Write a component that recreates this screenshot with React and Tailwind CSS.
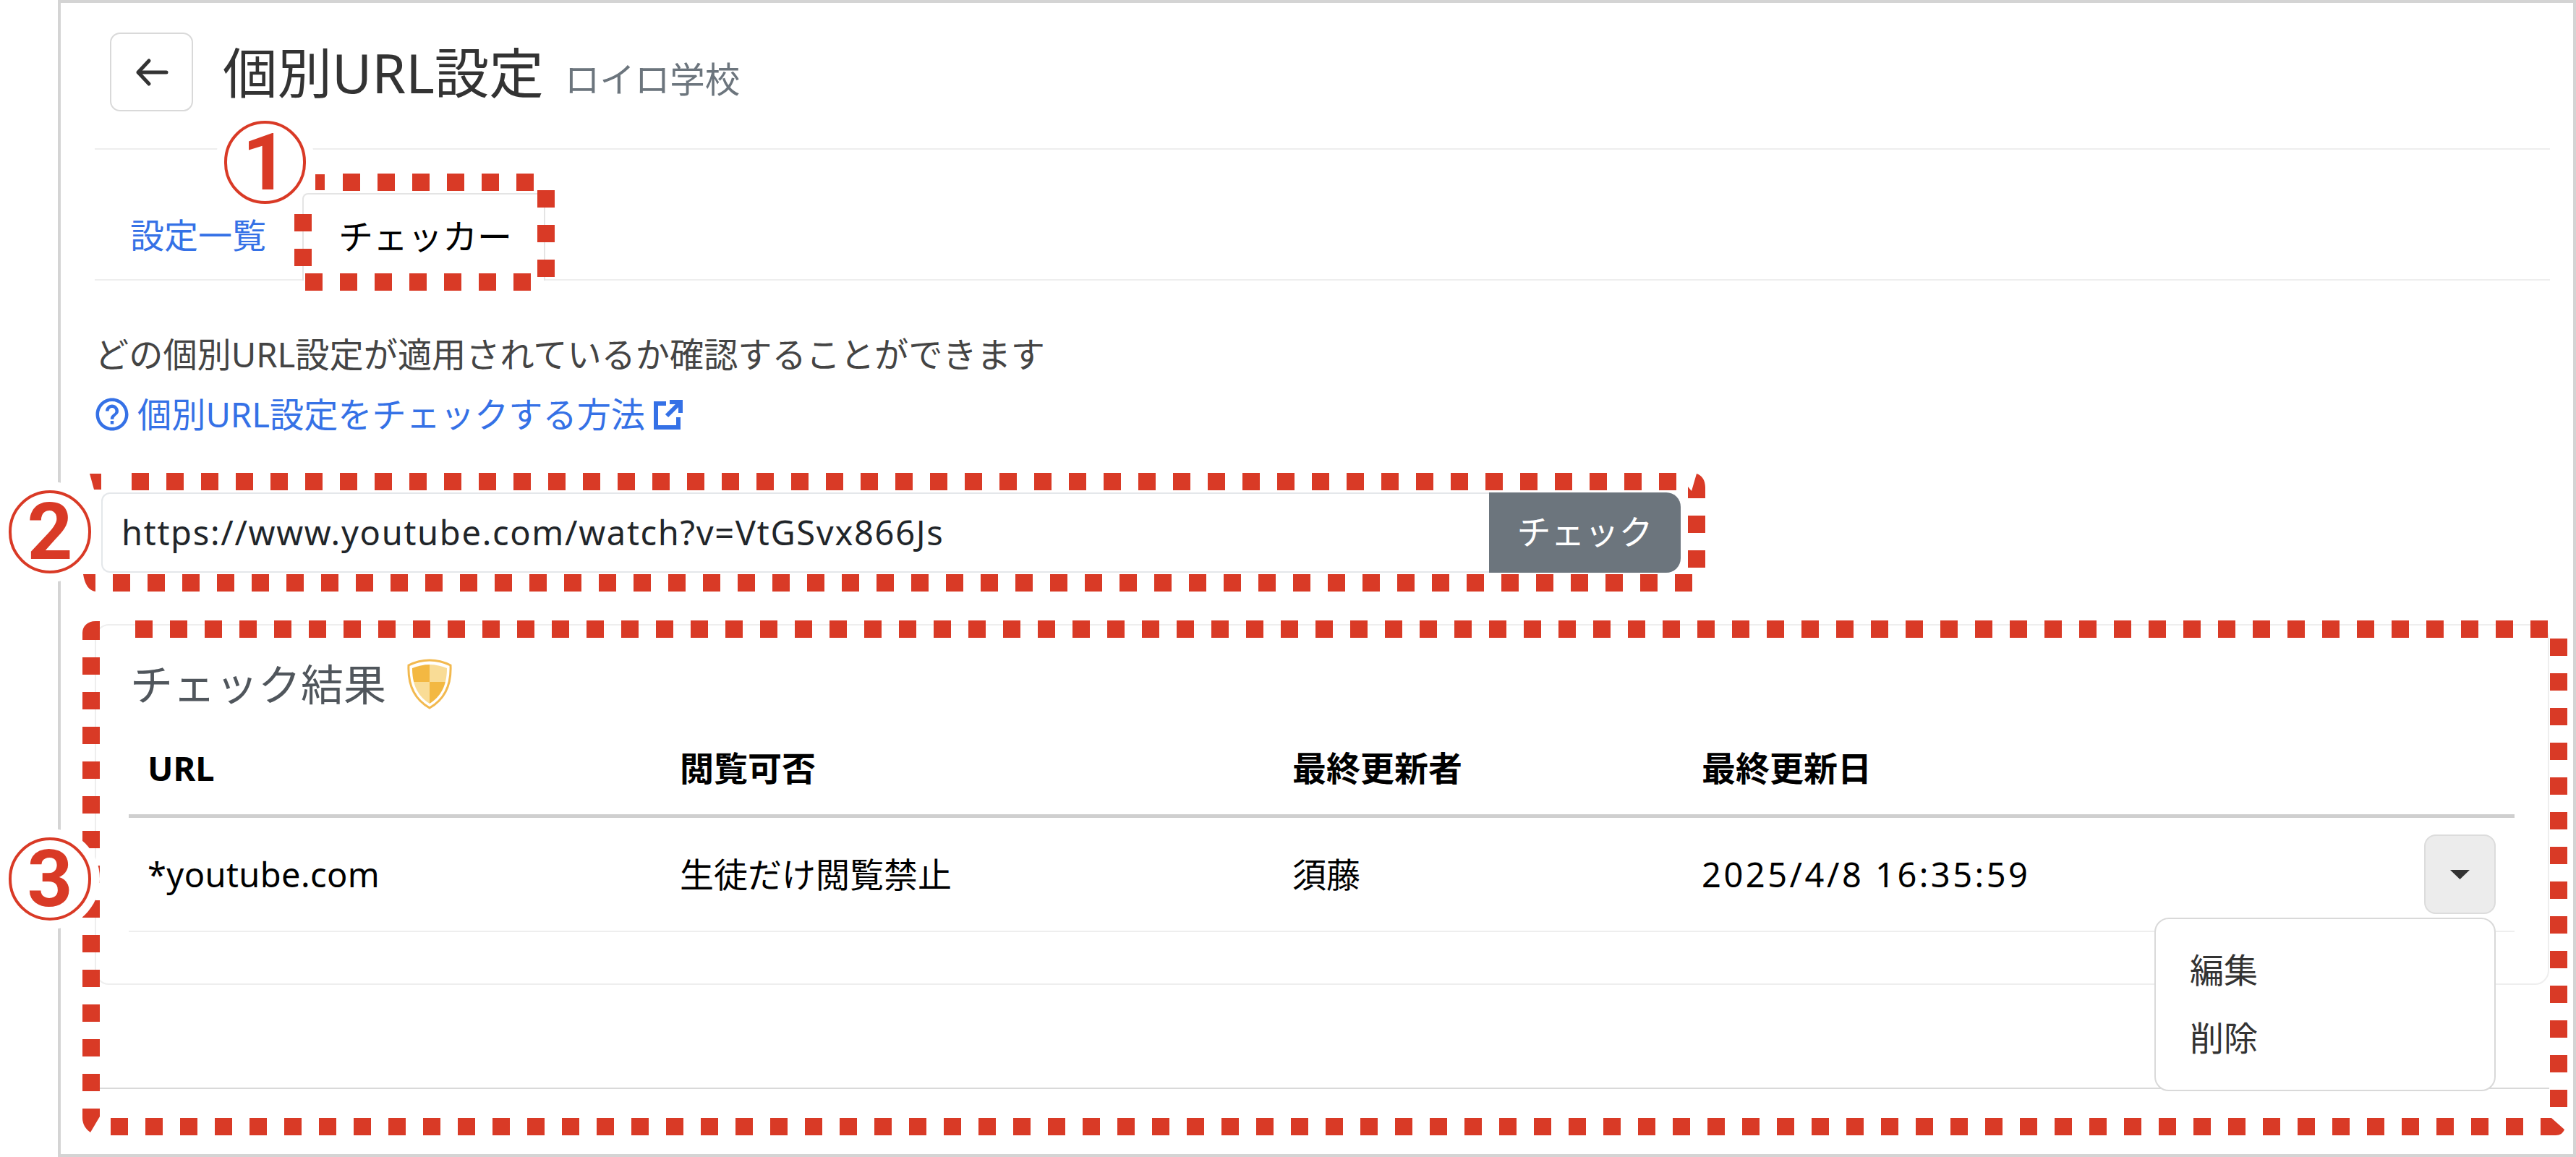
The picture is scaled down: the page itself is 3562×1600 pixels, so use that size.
import React from 'react';
import { MdHelpOutline } from 'react-icons/md';

const RED = '#d93a26';

function DashLine({ x1, y1, x2, y2 }) {
  return <line x1={x1} y1={y1} x2={x2} y2={y2} stroke={RED} strokeWidth="24" strokeDasharray="24 24" />;
}

// red dashed boxes drawn on top of the screenshot
function Annotations() {
  return (
    <svg className="absolute inset-0 w-[3562px] h-[1600px] pointer-events-none" viewBox="0 0 3562 1600">
      {/* box 1 */}
      <rect x="436" y="241" width="13" height="22" fill={RED} />
      <DashLine x1={474} y1={252} x2={738} y2={252} />
      <DashLine x1={755} y1={263} x2={755} y2={383} />
      <DashLine x1={422} y1={390} x2={734} y2={390} />
      <DashLine x1={419} y1={296} x2={419} y2={368} />
      {/* box 2 */}
      <path d="M124 655 L140 655 L140 677 L130 677 Z" fill={RED} />
      <DashLine x1={182} y1={666} x2={2318} y2={666} />
      <path d="M2334 689 L2334 673 L2339 679 L2346 655 C2353 657 2358 664 2358 674 L2358 689 Z" fill={RED} />
      <DashLine x1={2346} y1={713} x2={2346} y2={785} />
      <DashLine x1={156} y1={806} x2={2340} y2={806} />
      <path d="M115 794 L132 794 L132 818 C123 817 117 808 115 794 Z" fill={RED} />
      {/* box 3 */}
      <path d="M114 885 L114 875 C114 866 121 859 132 859 L138 859 L138 885 Z" fill={RED} />
      <DashLine x1={187} y1={870} x2={3523} y2={870} />
      <DashLine x1={3538} y1={883} x2={3538} y2={1531} />
      <DashLine x1={126} y1={909} x2={126} y2={1510} />
      <path d="M114 1533 L138 1533 L138 1544 L125 1566 C119 1562 114 1555 114 1546 Z" fill={RED} />
      <DashLine x1={153} y1={1558} x2={3490} y2={1558} />
      <path d="M3513 1546 L3528 1546 L3546 1562 C3544 1567 3540 1570 3534 1570 L3513 1570 Z" fill={RED} />
    </svg>
  );
}

function ShieldIcon() {
  return (
    <svg width="62" height="70" viewBox="0 0 62 70" className="ml-[29px]">
      <defs>
        <clipPath id="shield-inner">
          <path d="M31 8 C39 8 48 10 55 13 C55 32 50 50 31 62 C12 50 7 32 7 13 C14 10 23 8 31 8 Z" />
        </clipPath>
      </defs>
      <path d="M31 2 C41 2 52 5 60 9 C61 32 54 55 31 68 C8 55 1 32 2 9 C10 5 21 2 31 2 Z" fill="#fff" stroke="#f2b94f" strokeWidth="3" />
      <g clipPath="url(#shield-inner)">
        <rect x="0" y="0" width="31" height="32" fill="#f3b842" />
        <rect x="31" y="0" width="31" height="32" fill="#f9dc96" />
        <rect x="0" y="32" width="31" height="38" fill="#f9dc96" />
        <rect x="31" y="32" width="31" height="38" fill="#f3b842" />
      </g>
    </svg>
  );
}

function ExternalIcon() {
  return (
    <svg width="40" height="42" viewBox="0 0 40 42" fill="none" stroke="currentColor" strokeWidth="6" className="ml-[12px]">
      <path d="M17 6 H3 V39 H34 V25" />
      <path d="M18 23 L35 6 M22 4 H37 V19" />
    </svg>
  );
}

export default function App() {
  return (
    <div className="relative w-[3562px] h-[1600px] bg-white pl-[80px] overflow-hidden font-['Noto_Sans','Noto_Sans_CJK_JP',sans-serif]">
      <div className="h-full border-4 border-[#d4d4d4] pl-[47px] pr-[32px] flex flex-col">
        {/* header */}
        <div className="h-[201px] shrink-0 pl-[21px] pt-[41px] flex items-start">
          <button className="w-[115px] h-[109px] border-2 border-[#d9d9d9] rounded-[14px] flex items-center justify-center">
            <svg width="46" height="40" viewBox="0 0 46 40" fill="none" stroke="#333" strokeWidth="5" strokeLinecap="round" strokeLinejoin="round">
              <path d="M43 20 H4 M19 4 L4 20 L19 36" />
            </svg>
          </button>
          <h1 className="ml-[41px] h-[109px] leading-[109px] text-[75.5px] text-[#333]">個別URL設定</h1>
          <span className="ml-[29px] mt-[10px] h-[109px] leading-[109px] text-[48.5px] text-[#6c757d]">ロイロ学校</span>
        </div>

        {/* tabs */}
        <div className="h-[183px] shrink-0 border-y-2 border-[#eeeeee] flex items-end pl-[49px]">
          <a className="w-[238px] h-[121px] leading-[121px] text-[47px] text-[#3571e6]">設定一覧</a>
          <div className="w-[336px] h-[121px] -mb-[2px] bg-white border-2 border-b-0 border-[#e4e4e4] rounded-t-[8px] pl-[48px] leading-[115px] text-[48px] text-black">チェッカー</div>
        </div>

        {/* description */}
        <p className="mt-[72px] h-[60px] leading-[60px] text-[47.2px] text-[#444]">どの個別URL設定が適用されているか確認することができます</p>
        <a className="mt-[23px] h-[60px] flex items-center text-[47.2px] text-[#3571e6]">
          <MdHelpOutline size={54} className="-ml-[3px]" />
          <span className="ml-[8px]">個別URL設定をチェックする方法</span>
          <ExternalIcon />
        </a>

        {/* url input */}
        <div className="mt-[78px] ml-[9px] w-[2184px] h-[111px] shrink-0 flex">
          <div className="flex-1 border-2 border-r-0 border-[#e4e7ea] rounded-l-[12px] pl-[26px] leading-[107px] text-[47px] tracking-[1.7px] text-[#212529]">https://www.youtube.com/watch?v=VtGSvx866Js</div>
          <button className="w-[265px] bg-[#6c757d] rounded-r-[20px] text-white text-[47px] pb-[3px]">チェック</button>
        </div>

        {/* result card */}
        <div className="mt-[71px] w-[3394px] h-[499px] shrink-0 border-2 border-[#eeeeee] rounded-[20px] pl-[45px] pr-[46px]">
          <div className="mt-[46px] h-[70px] flex items-center">
            <h4 className="ml-[2px] text-[59px] text-[#50565c]">チェック結果</h4>
            <ShieldIcon />
          </div>
          <div className="mt-[26px] grid grid-cols-[736px_847px_566px_1fr] h-[124px] border-b-[5px] border-[#cfcfcf] text-[47px] font-bold text-black leading-[110px]">
            <div className="pl-[26px]">URL</div>
            <div className="pl-[26px]">閲覧可否</div>
            <div className="pl-[26px]">最終更新者</div>
            <div className="pl-[26px]">最終更新日</div>
          </div>
          <div className="grid grid-cols-[736px_847px_566px_1fr] h-[158px] border-b-2 border-[#eeeeee] text-[47px] text-black leading-[156px]">
            <div className="pl-[26px] tracking-[0.4px]">*youtube.com</div>
            <div className="pl-[26px]">生徒だけ閲覧禁止</div>
            <div className="pl-[26px]">須藤</div>
            <div className="pl-[26px] pr-[26px] flex justify-between items-start">
              <span className="tracking-[3.5px]">2025/4/8 16:35:59</span>
              <div className="relative mt-[23px]">
                <button className="w-[99px] h-[110px] bg-[#ececec] border-2 border-[#dcdcdc] rounded-[16px] flex items-center justify-center">
                  <svg width="27" height="13" viewBox="0 0 27 13"><path d="M0 0 H27 L13.5 13 Z" fill="#333" /></svg>
                </button>
                <div className="absolute right-0 top-[115px] z-10 w-[472px] h-[240px] bg-white border-2 border-[#d9d9d9] rounded-[20px] pl-[47px] pt-[40px] text-[47px] text-[#333] leading-[60px]">
                  <div>編集</div>
                  <div className="mt-[34px]">削除</div>
                </div>
              </div>
            </div>
          </div>
        </div>

        {/* lower rule */}
        <div className="mt-[142px] w-[3394px] border-b-2 border-[#d9d9d9]" />
      </div>

      <Annotations />

      <div className="absolute left-[310px] top-[167px] w-[113px] h-[115px] rounded-full border-4 border-[#d93a26] bg-white ring-[12px] ring-white flex items-center justify-center font-['Roboto',sans-serif] font-bold text-[110px] leading-none text-[#d93a26]">1</div>
      <div className="absolute left-[12px] top-[678px] w-[114px] h-[115px] rounded-full border-4 border-[#d93a26] bg-white ring-[12px] ring-white flex items-center justify-center font-['Roboto',sans-serif] font-bold text-[110px] leading-none text-[#d93a26]">2</div>
      <div className="absolute left-[12px] top-[1158px] w-[114px] h-[115px] rounded-full border-4 border-[#d93a26] bg-white ring-[12px] ring-white flex items-center justify-center font-['Roboto',sans-serif] font-bold text-[110px] leading-none text-[#d93a26]">3</div>
    </div>
  );
}
